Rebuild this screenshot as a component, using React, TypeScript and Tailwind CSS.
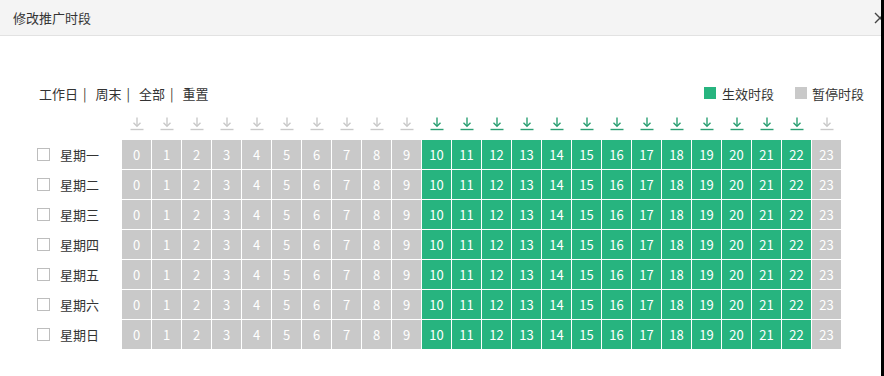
import React from "react";

const days = ["星期一", "星期二", "星期三", "星期四", "星期五", "星期六", "星期日"];
const hours = Array.from({ length: 24 }, (_, i) => i);
const isOn = (h: number) => h >= 10 && h <= 22;

function Arrow({ on }: { on: boolean }) {
  const c = on ? "#2a9f72" : "#c9c9c9";
  return (
    <svg width="14" height="15" viewBox="0 0 14 15" fill="none">
      <path d="M7 1.5V10" stroke={c} strokeWidth="1.4" />
      <path d="M3.5 6.8L7 10.3L10.5 6.8" stroke={c} strokeWidth="1.4" />
      <path d="M0.5 13.5H13.5" stroke={c} strokeWidth="1.4" />
    </svg>
  );
}

export default function App() {
  const font = { fontFamily: '"Noto Sans CJK SC", "Noto Sans", sans-serif' };
  return (
    <div className="w-[884px] h-[376px] flex bg-white overflow-hidden" style={font}>
      <div className="flex-1 flex flex-col min-w-0">
        <div className="h-[36px] shrink-0 bg-[#f4f4f4] border-b border-[#e2e2e2] flex items-center justify-between pl-[13px] overflow-hidden">
          <span className="text-[13px] text-[#333]">修改推广时段</span>
          <svg width="12" height="12" viewBox="0 0 12 12" className="mr-[-5px]">
            <path d="M1 1L11 11M11 1L1 11" stroke="#444" strokeWidth="1.4" />
          </svg>
        </div>
        <div className="flex items-center justify-between pl-[39px] pr-[17px] mt-[48px] h-[18px] text-[13px] text-[#333] leading-none">
          <div className="flex items-center">
            <span>工作日</span><span className="ml-[5px] mr-[9px]">|</span>
            <span>周末</span><span className="ml-[5px] mr-[9px]">|</span>
            <span>全部</span><span className="ml-[5px] mr-[9px]">|</span>
            <span>重置</span>
          </div>
          <div className="flex items-center">
            <span className="w-[12px] h-[12px] bg-[#27b47f] mr-[6px]" />
            <span>生效时段</span>
            <span className="w-[12px] h-[12px] bg-[#c9c9c9] ml-[21px] mr-[5px]" />
            <span>暂停时段</span>
          </div>
        </div>
        <div className="flex pl-[122px] mt-[14px] gap-px">
          {hours.map((h) => (
            <div key={h} className="w-[29px] h-[15px] flex justify-center">
              <Arrow on={isOn(h)} />
            </div>
          ))}
        </div>
        <div className="flex flex-col gap-px mt-[9px]">
          {days.map((d) => (
            <div key={d} className="flex items-center">
              <div className="w-[122px] pl-[37px] flex items-center">
                <span className="w-[13px] h-[13px] border border-[#bdbdbd] bg-white" />
                <span className="ml-[10px] text-[13px] text-[#333]">{d}</span>
              </div>
              <div className="flex gap-px">
                {hours.map((h) => (
                  <div
                    key={h}
                    className={
                      "w-[29px] h-[29px] flex items-center justify-center text-[13px] text-white " +
                      (isOn(h) ? "bg-[#27b47f]" : "bg-[#c9c9c9]")
                    }
                  >
                    {h}
                  </div>
                ))}
              </div>
            </div>
          ))}
        </div>
      </div>
      <div className="w-[3px] h-full bg-black shrink-0" />
    </div>
  );
}
